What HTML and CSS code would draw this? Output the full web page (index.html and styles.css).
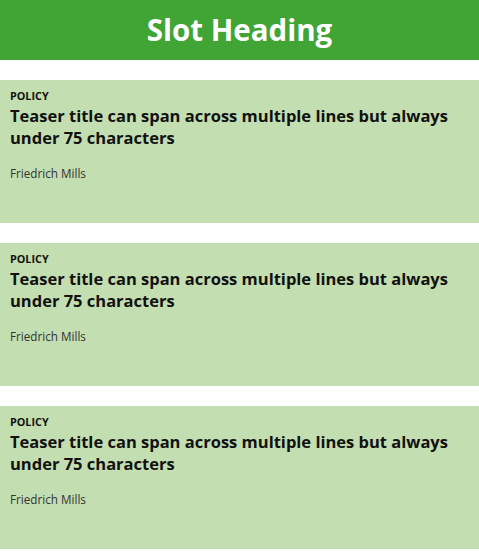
FILE: index.html
```html
<!DOCTYPE html>
<html lang="en">
<head>
<meta charset="utf-8">
<title>Slot</title>
<link rel="stylesheet" href="styles.css">
</head>
<body>
<header class="slot-heading"><h1 class="slot-title">Slot Heading</h1></header>
<main class="teasers">
  <article class="teaser">
    <div class="teaser-label">POLICY</div>
    <h2 class="teaser-title">Teaser title can span across multiple lines but always under 75 characters</h2>
    <div class="teaser-author">Friedrich Mills</div>
  </article>
  <article class="teaser">
    <div class="teaser-label">POLICY</div>
    <h2 class="teaser-title">Teaser title can span across multiple lines but always under 75 characters</h2>
    <div class="teaser-author">Friedrich Mills</div>
  </article>
  <article class="teaser">
    <div class="teaser-label">POLICY</div>
    <h2 class="teaser-title">Teaser title can span across multiple lines but always under 75 characters</h2>
    <div class="teaser-author">Friedrich Mills</div>
  </article>
</main>
</body>
</html>
```
FILE: styles.css
```css
html, body {
  margin: 0;
  padding: 0;
  background: #ffffff;
}
body {
  font-family: "Open Sans", "Liberation Sans", sans-serif;
  color: #111111;
}
.slot-heading {
  background: #40a535;
  height: 60px;
  display: flex;
  align-items: center;
  justify-content: center;
}
.slot-title {
  margin: 0;
  color: #ffffff;
  font-size: 29.5px;
  font-weight: 700;
  line-height: 1;
}
.teasers {
  display: flex;
  flex-direction: column;
  gap: 20px;
  padding-top: 20px;
}
.teaser {
  background: #c3deb0;
  height: 143px;
  box-sizing: border-box;
  padding: 9px 10px 0;
}
.teaser-label {
  font-size: 10.8px;
  font-weight: 700;
  line-height: 14px;
  color: #111111;
}
.teaser-title {
  margin: 2px 0 0;
  font-size: 16.5px;
  font-weight: 700;
  line-height: 22px;
  color: #111111;
}
.teaser-author {
  margin-top: 16px;
  font-size: 11.7px;
  font-weight: 400;
  line-height: 16px;
  color: #333333;
}
```
